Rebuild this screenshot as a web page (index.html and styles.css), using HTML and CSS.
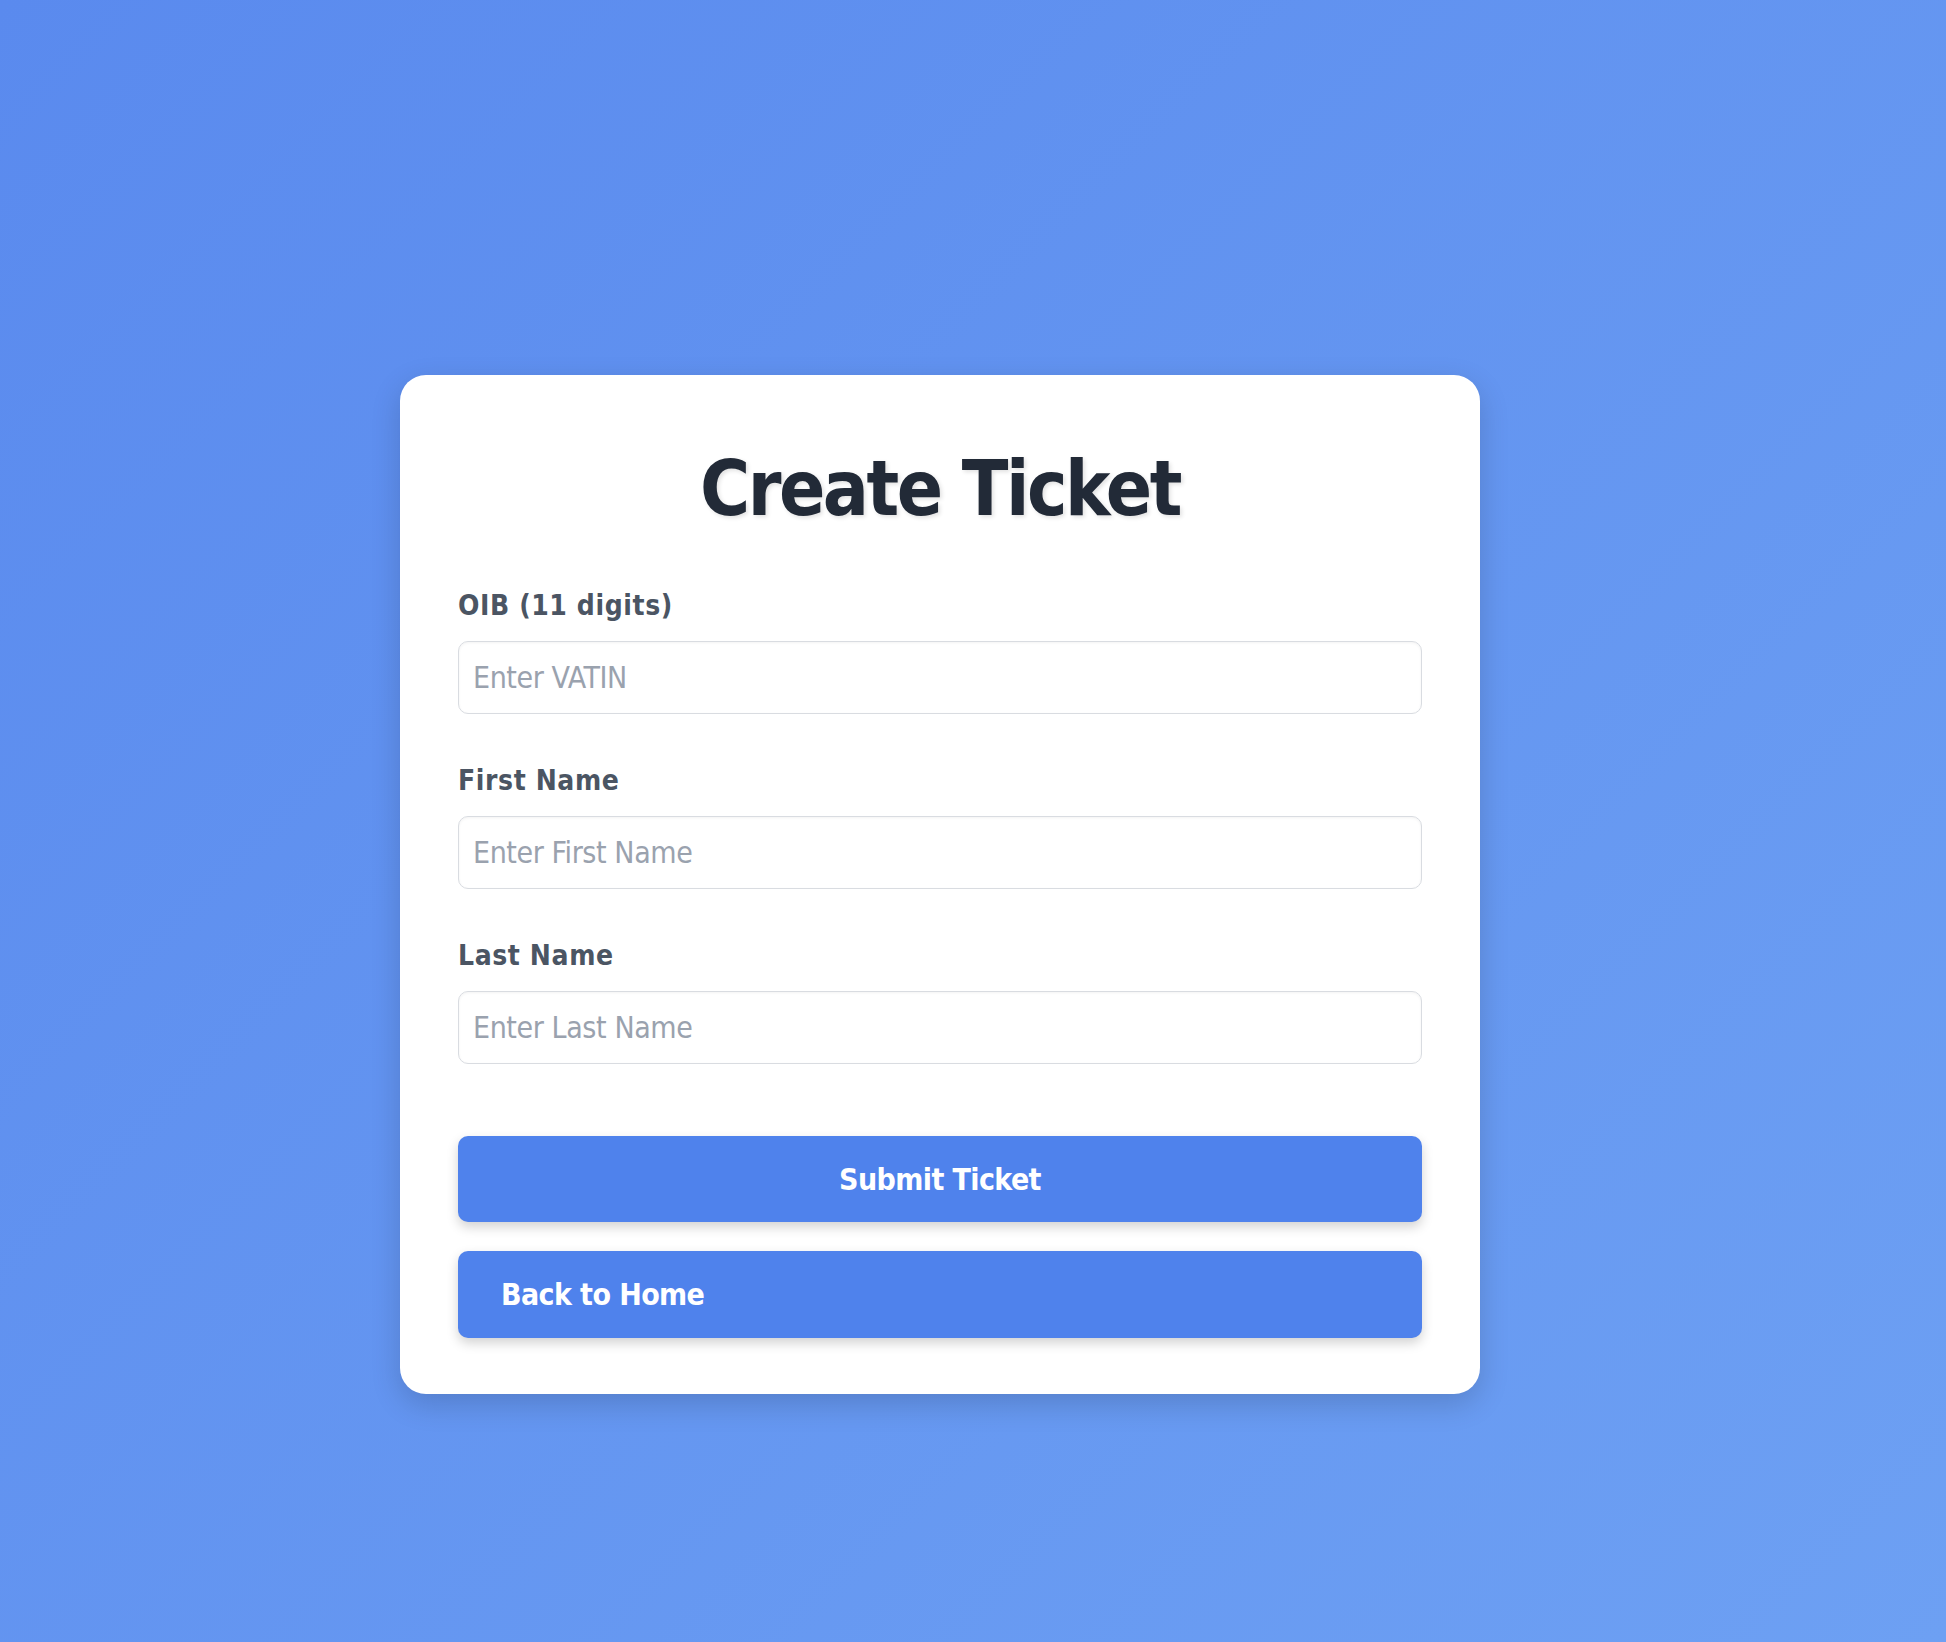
FILE: index.html
```html
<!DOCTYPE html>
<html lang="en">
<head>
<meta charset="utf-8">
<title>Create Ticket</title>
<link rel="stylesheet" href="styles.css">
</head>
<body>
<main class="page">
  <form class="card">
    <h1 class="title">Create Ticket</h1>
    <div class="field">
      <label class="label" for="oib">OIB (11 digits)</label>
      <input class="input" id="oib" type="text" placeholder="Enter VATIN">
    </div>
    <div class="field">
      <label class="label" for="fn">First Name</label>
      <input class="input" id="fn" type="text" placeholder="Enter First Name">
    </div>
    <div class="field">
      <label class="label" for="ln">Last Name</label>
      <input class="input" id="ln" type="text" placeholder="Enter Last Name">
    </div>
    <div class="actions">
      <button class="btn btn-submit" type="button">Submit Ticket</button>
      <a class="btn btn-back" href="#">Back to Home</a>
    </div>
  </form>
</main>
</body>
</html>
```

FILE: styles.css
```css
* { box-sizing: border-box; }

html, body {
  margin: 0;
  height: 100%;
}

body {
  background: linear-gradient(135deg, #5a8aee 0%, #6da0f3 100%);
  font-family: Tahoma, "DejaVu Sans Condensed", "DejaVu Sans", sans-serif;
  font-stretch: condensed;
}

.page {
  padding: 375px 0 0 400px;
}

.card {
  width: 1080px;
  background: #ffffff;
  border-radius: 26px;
  padding: 68px 58px 56px;
  box-shadow: 0 10px 30px rgba(0, 0, 0, 0.16);
  display: flex;
  flex-direction: column;
}

.title {
  margin: 0 0 54px;
  font-size: 76px;
  line-height: 92px;
  font-weight: 700;
  color: #222a37;
  text-align: center;
  letter-spacing: -2.5px;
  text-shadow: 2px 2px 4px rgba(0, 0, 0, 0.12);
}

.field {
  display: flex;
  flex-direction: column;
  margin-bottom: 50px;
}

.label {
  font-size: 28px;
  line-height: 34px;
  font-weight: 700;
  color: #4b5563;
  letter-spacing: 0.6px;
  margin-bottom: 18px;
}

.input {
  height: 73px;
  width: 100%;
  border: 1.5px solid #d9dce1;
  border-radius: 10px;
  padding: 0 14px;
  font-family: inherit;
  font-size: 30px;
  color: #222a37;
  background: #ffffff;
  box-shadow: inset 0 1px 3px rgba(0, 0, 0, 0.05);
  outline: none;
}

.input::placeholder {
  color: #9aa2ae;
  letter-spacing: -0.4px;
}

.actions {
  display: flex;
  flex-direction: column;
  gap: 29px;
  margin-top: 22px;
}

.btn {
  display: flex;
  align-items: center;
  width: 100%;
  border: none;
  border-radius: 10px;
  background: #4f82ec;
  color: #ffffff;
  font-family: inherit;
  font-size: 30px;
  font-weight: 700;
  letter-spacing: -0.6px;
  text-decoration: none;
  box-shadow: 0 5px 12px rgba(0, 0, 0, 0.18);
  cursor: pointer;
}

.btn-submit {
  height: 86px;
  justify-content: center;
}

.btn-back {
  height: 87px;
  padding-left: 43px;
  justify-content: flex-start;
}
```
